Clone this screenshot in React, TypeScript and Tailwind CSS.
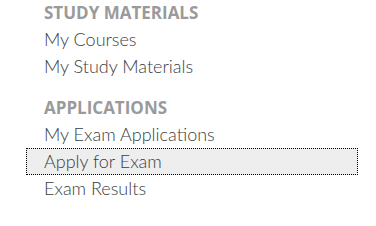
import React from 'react';

const sections = [
  { title: 'Study Materials', links: ['My Courses', 'My Study Materials'] },
  { title: 'Applications', links: ['My Exam Applications', 'Apply for Exam', 'Exam Results'] },
];

const ACTIVE = 'Apply for Exam';

export default function App() {
  return (
    <div className="w-[376px] h-[226px] bg-white pl-[26px] pt-[1px]">
      <nav className="w-[332px] flex flex-col gap-[16px]">
        {sections.map((s) => (
          <div key={s.title} className="flex flex-col">
            <h3 className="pl-[18px] h-[25px] leading-[23px] text-[17px] font-bold uppercase text-[#9a9a9a] font-['Open_Sans',sans-serif]">
              {s.title}
            </h3>
            <ul className="flex flex-col">
              {s.links.map((l) => (
                <li key={l}>
                  <a
                    href="#"
                    className={`block h-[27px] leading-[25px] pl-[17px] text-[18px] font-light text-[#3a3d42] font-['Lato',sans-serif] border border-dotted ${
                      l === ACTIVE ? 'bg-[#eeeeee] border-black' : 'border-transparent'
                    }`}
                  >
                    {l}
                  </a>
                </li>
              ))}
            </ul>
          </div>
        ))}
      </nav>
    </div>
  );
}
